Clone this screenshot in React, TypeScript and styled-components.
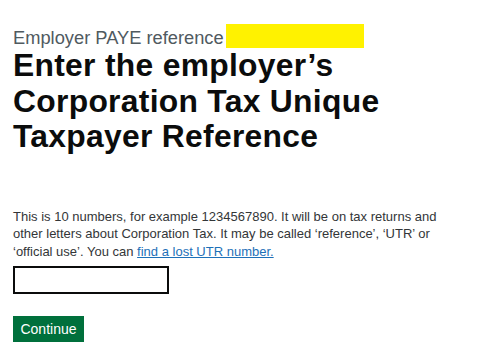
import React from "react";
import styled, { createGlobalStyle } from "styled-components";

const Global = createGlobalStyle`
  html, body { margin: 0; padding: 0; background: #ffffff; }
  body { font-family: "Liberation Sans", Arial, sans-serif; color: #0b0c0c; }
`;

const Page = styled.main`
  padding: 24px 13px 0 13px;
  display: flex;
  flex-direction: column;
  align-items: flex-start;
`;

const CaptionRow = styled.div`
  display: flex;
  align-items: flex-end;
  height: 24px;
`;

const CaptionText = styled.span`
  font-size: 18.3px;
  line-height: 20px;
  color: #505a5f;
`;

const Redaction = styled.span`
  display: block;
  width: 138px;
  height: 24px;
  margin-left: 2px;
  background: #fff200;
`;

const Heading = styled.h1`
  margin: 0;
  font-size: 31.8px;
  line-height: 35.5px;
  font-weight: 700;
  letter-spacing: 0.3px;
  color: #0b0c0c;
`;

const Hint = styled.p`
  margin: 53px 0 0 0;
  width: 436px;
  font-size: 13px;
  line-height: 17.65px;
  color: #333638;
`;

const HintLink = styled.a`
  color: #1d70b8;
  text-decoration: underline;
  text-underline-offset: 1px;
`;

const TextInput = styled.input`
  box-sizing: border-box;
  margin-top: 6px;
  width: 156px;
  height: 28px;
  border: 2px solid #0b0c0c;
  border-radius: 0;
  padding: 2px 4px;
  font-family: inherit;
  font-size: 13px;
  outline: none;
`;

const Button = styled.button`
  box-sizing: border-box;
  margin-top: 22px;
  width: 71px;
  height: 26px;
  padding: 0;
  border: none;
  border-radius: 0;
  background: #00703c;
  box-shadow: 0 2px 0 #002d18;
  color: #ffffff;
  font-family: inherit;
  font-size: 14px;
  line-height: 26px;
  text-align: center;
  cursor: pointer;
`;

export default function App() {
  return (
    <>
      <Global />
      <Page>
        <CaptionRow>
          <CaptionText>Employer PAYE reference</CaptionText>
          <Redaction />
        </CaptionRow>
        <Heading>
          Enter the employer’s
          <br />
          Corporation Tax Unique
          <br />
          Taxpayer Reference
        </Heading>
        <Hint>
          This is 10 numbers, for example 1234567890. It will be on tax returns
          and other letters about Corporation Tax. It may be called ‘reference’,
          ‘UTR’ or ‘official use’. You can{" "}
          <HintLink href="#">find a lost UTR number.</HintLink>
        </Hint>
        <TextInput type="text" aria-label="Corporation Tax Unique Taxpayer Reference" />
        <Button type="button">Continue</Button>
      </Page>
    </>
  );
}
